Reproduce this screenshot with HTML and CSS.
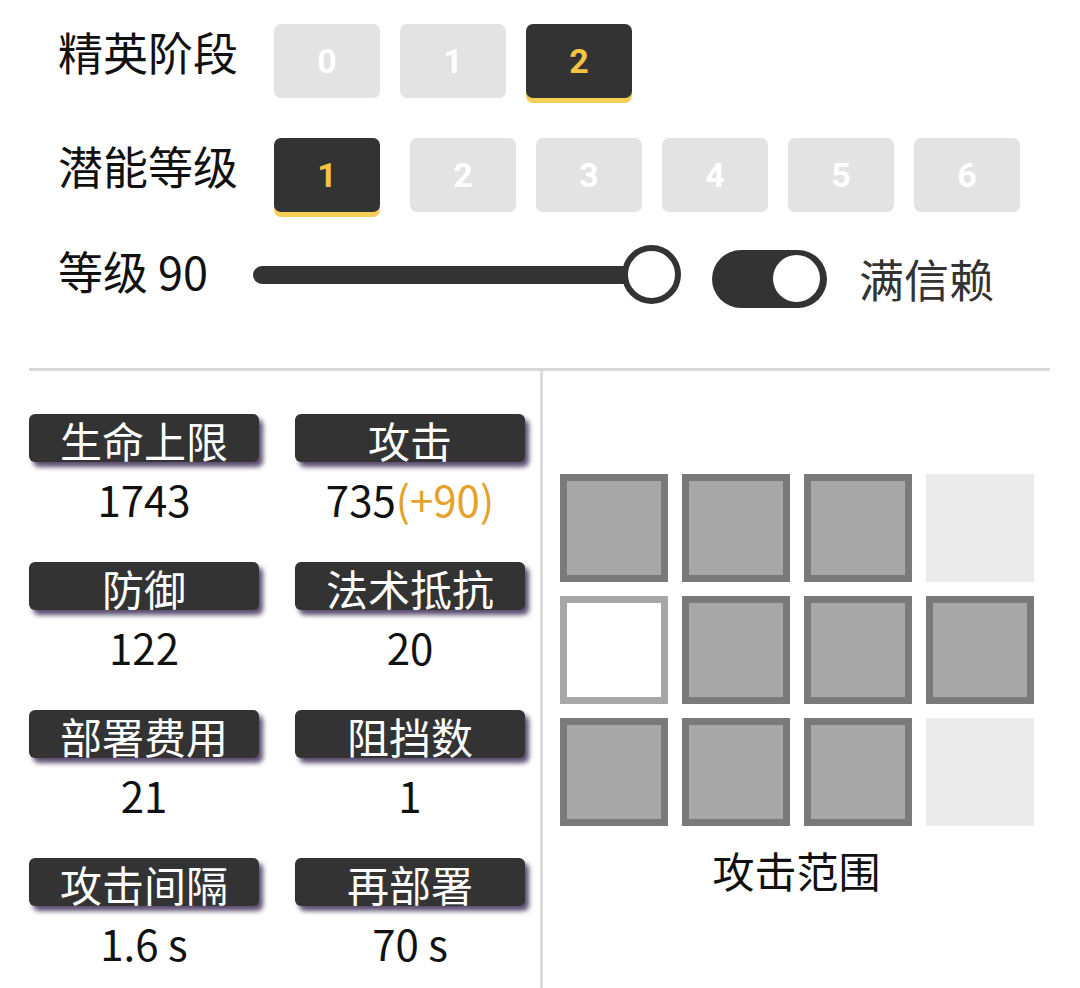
FILE: index.html
```html
<!DOCTYPE html>
<html lang="zh">
<head>
<meta charset="utf-8">
<title>干员属性</title>
<link rel="stylesheet" href="styles.css">
</head>
<body>
<div class="top">
  <div class="row">
    <div class="label">精英阶段</div>
    <div class="btns">
      <div class="btn">0</div>
      <div class="btn">1</div>
      <div class="btn active">2</div>
    </div>
  </div>
  <div class="row row2">
    <div class="label">潜能等级</div>
    <div class="btns pot">
      <div class="btn active">1</div>
      <div class="btn">2</div>
      <div class="btn">3</div>
      <div class="btn">4</div>
      <div class="btn">5</div>
      <div class="btn">6</div>
    </div>
  </div>
  <div class="row level">
    <div class="level-label">等级 90</div>
    <div class="slider">
      <div class="track"></div>
      <div class="knob"></div>
    </div>
    <div class="toggle"><div class="toggle-knob"></div></div>
    <div class="trust">满信赖</div>
  </div>
</div>
<div class="bottom">
  <div class="stats">
    <div class="stat"><div class="stat-label">生命上限</div><div class="stat-value">1743</div></div>
    <div class="stat"><div class="stat-label">攻击</div><div class="stat-value">735<span class="bonus">(+90)</span></div></div>
    <div class="stat"><div class="stat-label">防御</div><div class="stat-value">122</div></div>
    <div class="stat"><div class="stat-label">法术抵抗</div><div class="stat-value">20</div></div>
    <div class="stat"><div class="stat-label">部署费用</div><div class="stat-value">21</div></div>
    <div class="stat"><div class="stat-label">阻挡数</div><div class="stat-value">1</div></div>
    <div class="stat"><div class="stat-label">攻击间隔</div><div class="stat-value">1.6 s</div></div>
    <div class="stat"><div class="stat-label">再部署</div><div class="stat-value">70 s</div></div>
  </div>
  <div class="range">
    <div class="grid">
      <div class="cell on"></div><div class="cell on"></div><div class="cell on"></div><div class="cell"></div>
      <div class="cell self"></div><div class="cell on"></div><div class="cell on"></div><div class="cell on"></div>
      <div class="cell on"></div><div class="cell on"></div><div class="cell on"></div><div class="cell"></div>
    </div>
    <div class="caption">攻击范围</div>
  </div>
</div>
</body>
</html>
```

FILE: styles.css
```css
html, body {
  margin: 0;
  padding: 0;
  background: #ffffff;
  overflow: hidden;
}
body {
  font-family: "Noto Sans CJK SC", "Noto Sans", sans-serif;
  color: #111111;
  width: 1080px;
  height: 988px;
}
.top {
  padding: 24px 0 0 58px;
}
.row {
  display: flex;
  align-items: flex-start;
}
.row2 {
  margin-top: 40px;
}
.label {
  width: 216px;
  font-size: 45px;
  line-height: 56px;
  color: #111111;
}
.btns {
  display: flex;
  gap: 20px;
}
.pot .btn:first-child {
  margin-right: 10px;
}
.btn {
  width: 106px;
  height: 74px;
  border-radius: 7px;
  background: #e3e3e3;
  color: #ffffff;
  font-family: Roboto, "Liberation Sans", sans-serif;
  font-weight: 700;
  font-size: 34px;
  display: flex;
  align-items: center;
  justify-content: center;
}
.btn.active {
  background: #333333;
  color: #f5c443;
  box-shadow: 0 5px 0 #f7ce55;
}
.level {
  margin-top: 33px;
  align-items: center;
  height: 59px;
}
.level-label {
  width: 195px;
  font-size: 45px;
  line-height: 56px;
  margin-top: -8px;
}
.slider {
  width: 428px;
  display: flex;
  align-items: center;
}
.track {
  flex: 1;
  height: 18px;
  border-radius: 9px;
  background: #333333;
}
.knob {
  width: 47px;
  height: 47px;
  border: 6px solid #333333;
  border-radius: 50%;
  background: #ffffff;
  margin-left: -29px;
}
.toggle {
  width: 115px;
  height: 58px;
  border-radius: 29px;
  background: #333333;
  margin-left: 31px;
  margin-top: 8px;
  box-sizing: border-box;
  padding-right: 7px;
  display: flex;
  align-items: center;
  justify-content: flex-end;
}
.toggle-knob {
  width: 47px;
  height: 47px;
  border-radius: 50%;
  background: #ffffff;
}
.trust {
  margin-left: 32px;
  font-size: 45px;
  line-height: 56px;
  color: #333333;
  margin-top: 8px;
}
.bottom {
  margin: 64px 30px 0 29px;
  border-top: 3px solid #d8d8d8;
  display: flex;
  height: 617px;
}
.stats {
  width: 511px;
  border-right: 3px solid #dcdcdc;
  padding-top: 43px;
  display: grid;
  grid-template-columns: 230px 230px;
  column-gap: 36px;
  row-gap: 35px;
  align-content: start;
}
.stat {
  display: flex;
  flex-direction: column;
  align-items: center;
}
.stat-label {
  width: 230px;
  height: 48px;
  border-radius: 6px;
  background: #333333;
  color: #ffffff;
  font-size: 42px;
  line-height: 52px;
  text-align: center;
  overflow: visible;
  box-shadow: 4px 5px 5px rgba(74, 58, 96, 0.9);
}
.stat-value {
  margin-top: 9px;
  font-size: 42px;
  line-height: 56px;
  height: 56px;
  color: #111111;
}
.bonus {
  color: #e6a128;
}
.range {
  flex: 1;
  padding-top: 103px;
  display: flex;
  flex-direction: column;
  align-items: center;
}
.grid {
  display: grid;
  grid-template-columns: repeat(4, 108px);
  grid-auto-rows: 108px;
  gap: 14px;
}
.cell {
  background: #ebebeb;
  box-sizing: border-box;
}
.cell.on {
  background: #a7a7a7;
  border: 7px solid #7a7a7a;
}
.cell.self {
  background: #ffffff;
  border: 7px solid #a7a7a7;
}
.caption {
  margin-top: 16px;
  font-size: 42px;
  line-height: 56px;
  color: #111111;
}
```
